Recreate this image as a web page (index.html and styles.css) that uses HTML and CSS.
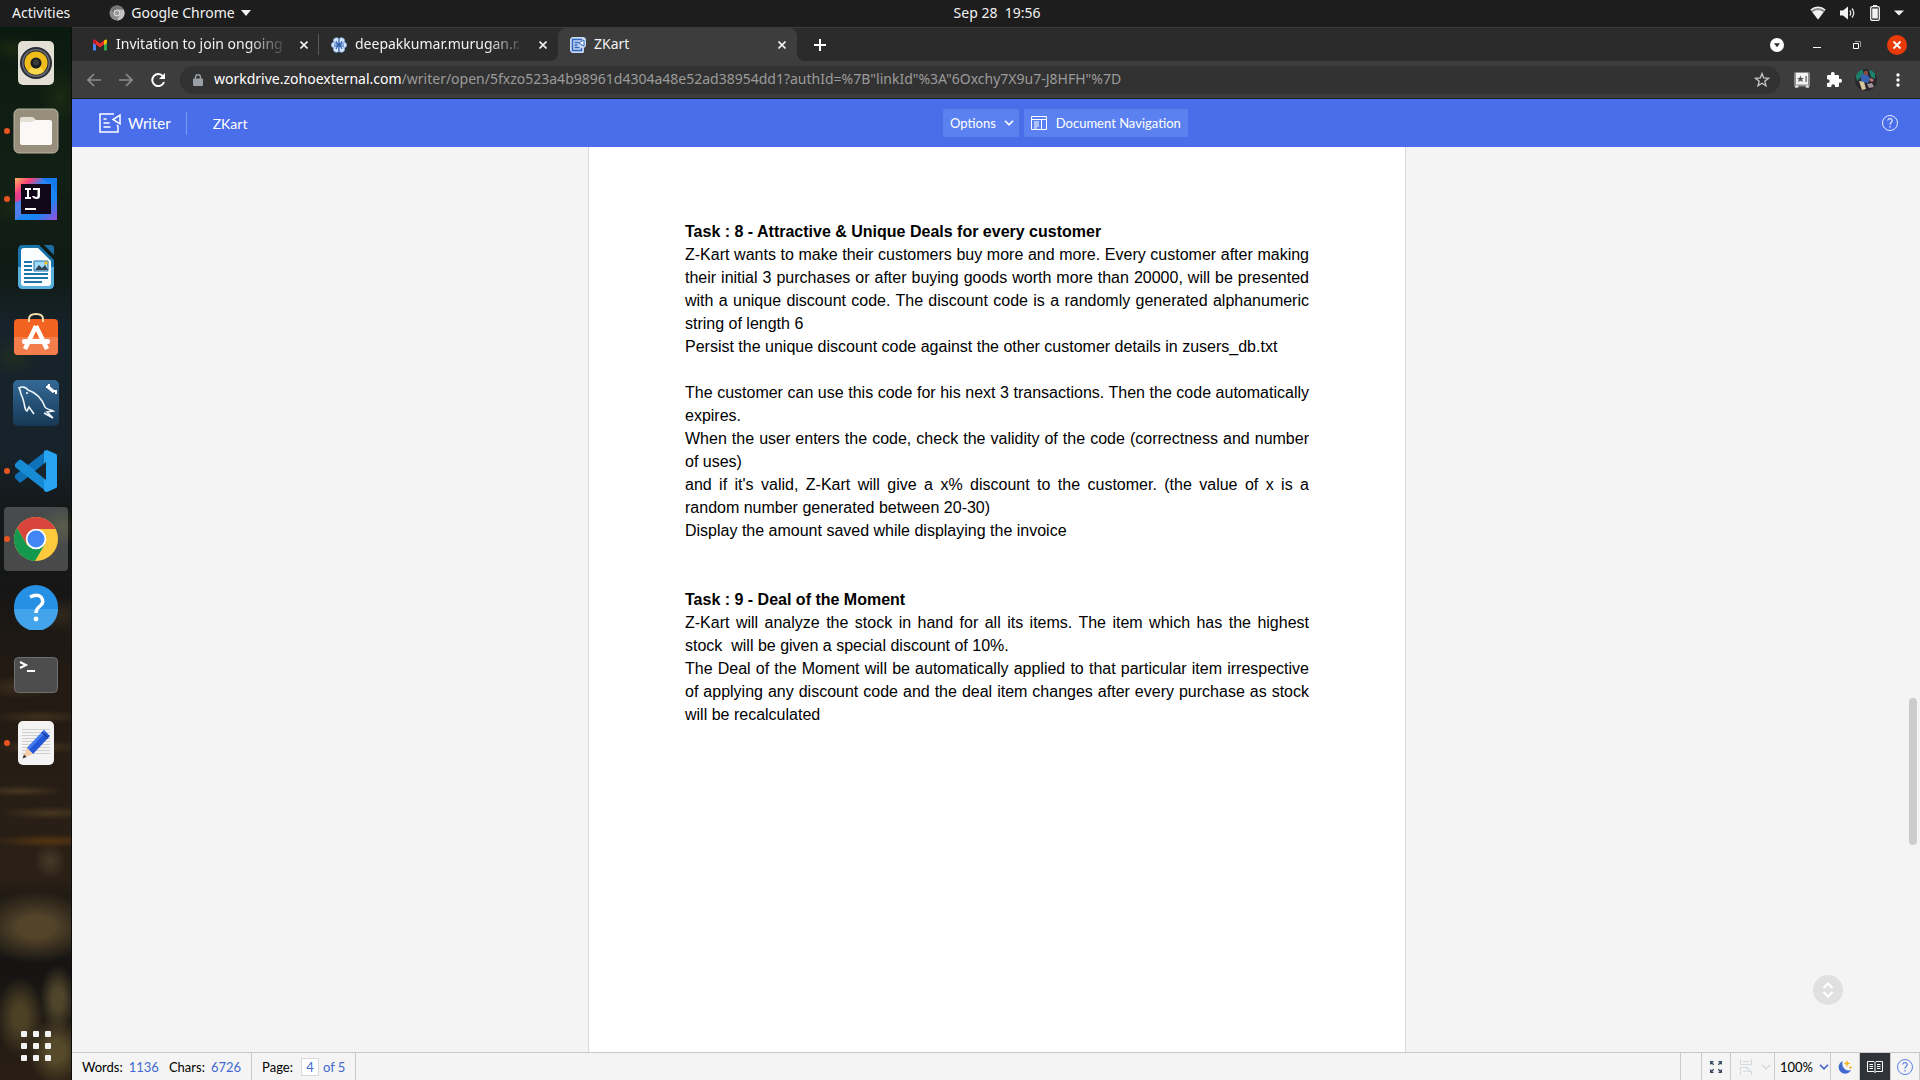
FILE: index.html
```html
<!DOCTYPE html>
<html lang="en">
<head>
<meta charset="utf-8">
<title>ZKart</title>
<link rel="stylesheet" href="styles.css">
</head>
<body>
<div class="desktop">
  <header class="topbar">
    <div class="topbar-left">
      <button class="plain">Activities</button>
      <button class="plain app-menu">
        <svg width="16" height="16" viewBox="0 0 16 16"><circle cx="8" cy="8" r="7.500" fill="#8c8c8c"/><path d="M8 4.500h6.700A7.500 7.500 0 0 1 8 15.500l3-5.700A3.500 3.500 0 0 0 8 4.500" fill="#c4c4c4"/><path d="M8 4.500h6.700A7.500 7.500 0 0 0 1.600 4l3.300 5.600A3.500 3.500 0 0 1 8 4.500" fill="#767676"/><circle cx="8" cy="8" r="3" fill="#9b9b9b" stroke="#e6e6e6"/></svg>
        <span>Google Chrome</span>
        <svg width="10" height="6" viewBox="0 0 10 6"><path d="M0 0h10L5 6z" fill="#f2f2f2"/></svg>
      </button>
    </div>
    <time class="clock">Sep 28&nbsp; 19:56</time>
    <div class="tray">
      <svg width="16" height="14" viewBox="0 0 16 14"><path d="M8 13.500L.6 4.300C4.500.6 11.500.6 15.400 4.300z" fill="#8d8d8d"/><path d="M8 13.500L2.600 6.200c3-2.600 7.800-2.600 10.800 0z" fill="#f2f2f2"/><path d="M.8 4C5 .4 11 .4 15.200 4" fill="none" stroke="#f2f2f2" stroke-width="1.400"/></svg>
      <svg width="16" height="14" viewBox="0 0 16 14"><path d="M0 4.500h3L8 .5v13L3 9.500H0z" fill="#f2f2f2"/><path d="M9.800 4.500q1.800 2.500 0 5M12 2.500q3.500 4.500 0 9" fill="none" stroke="#e2e2e2" stroke-width="1.300"/></svg>
      <svg width="10" height="16" viewBox="0 0 10 16"><path d="M3 0h4v2H3z" fill="#f2f2f2"/><rect x=".7" y="1.700" width="8.600" height="13.600" rx="1.300" fill="none" stroke="#f2f2f2" stroke-width="1.300"/><path d="M2.200 3.500h5.600v10H2.200z" fill="#f2f2f2"/></svg>
      <svg width="10" height="6" viewBox="0 0 10 6"><path d="M0 .5h10L5 5.500z" fill="#f2f2f2"/></svg>
    </div>
  </header>

  <div class="workspace">
    <nav class="dock" aria-label="Dock">
      <button class="app" aria-label="Rhythmbox"><svg width="46" height="46" viewBox="0 0 46 46"><rect x="5" y="1" width="36" height="44" rx="5" fill="#e3dfd5"/><circle cx="23" cy="23" r="16" fill="#2b2d38"/><circle cx="23" cy="23" r="14" fill="#6b7079"/><circle cx="23" cy="23" r="12.500" fill="#24252b"/><circle cx="23" cy="23" r="11.500" fill="#f0bd1c"/><path d="M23 23L15 31.200A11.500 11.500 0 0 0 31 31.200z" fill="#fad94e"/><circle cx="23" cy="23" r="5.500" fill="#1c1d20"/><circle cx="23" cy="22.500" r="3" fill="#3b3c40"/></svg></button>
      <button class="app running" aria-label="Files"><svg width="46" height="46" viewBox="0 0 46 46"><rect x="1" y="1" width="44" height="44" rx="5" fill="#978f7c" stroke="#b9b2a3"/><path d="M7 13V11q0-2 2-2h10q1 0 2 1l3 3h12q3 0 3 3H7z" fill="#e3dfd5"/><path d="M7 16q0-2 2-2h9l5-2h14q2 0 2 2v21q0 2-2 2H9q-2 0-2-2z" fill="#faf9f7"/></svg></button>
      <button class="app running" aria-label="IntelliJ IDEA"><svg width="46" height="46" viewBox="0 0 46 46"><defs><linearGradient id="ij" x1="0" y1="0" x2="1" y2="1"><stop offset="0" stop-color="#ffb45a"/><stop offset=".2" stop-color="#f9417b"/><stop offset=".38" stop-color="#2e84f2"/><stop offset=".7" stop-color="#1486f3"/><stop offset="1" stop-color="#9b4fd8"/></linearGradient></defs><path d="M2 2h42v42H2z" fill="url(#ij)"/><path d="M2 16L10 20 2 30z" fill="#e33d8a"/><path d="M2 26L10 24V38L2 44z" fill="#4f7fe8"/><path d="M28 2h16v18l-6-12z" fill="#157af0"/><path d="M8 8h30v30H8z" fill="#120718"/><path d="M12 12h6v2h-2v7h2v2h-6v-2h2v-7h-2zM20 12h7v8q0 3-3.500 3T19 20h2.300q.5 1 1.700 1 1.500 0 1.500-1.500V14H20zM12 32h11v2H12z" fill="#fff"/></svg></button>
      <button class="app" aria-label="LibreOffice Writer"><svg width="46" height="46" viewBox="0 0 46 46"><path d="M10 1h16l15 15v24q0 5-5 5H10q-5 0-5-5V6q0-5 5-5z" fill="#1873ab"/><path d="M5 23h36v17q0 5-5 5H10q-5 0-5-5z" fill="#58b0dc"/><path d="M11 4h14l13 13v22q0 3-3 3H11q-3 0-3-3V7q0-3 3-3z" fill="#fafcfd"/><path d="M31 1h7q3 0 3 3v7z" fill="#1b6fa3"/><path d="M11 18h8M11 22h8M11 26h8M11 30h24M11 34h24M11 38h18" stroke="#1d74a9" stroke-width="2"/><path d="M21 17h14v10H21z" fill="#9edafa" stroke="#1d74a9"/><path d="M22 26l4-5 3 3 3-3 3 5z" fill="#345"/><circle cx="33" cy="19" r="1.700" fill="#f5b91e"/></svg></button>
      <button class="app" aria-label="Ubuntu Software"><svg width="46" height="46" viewBox="0 2 46 46"><rect x="1" y="9" width="44" height="36" rx="4" fill="#f26322"/><path d="M1 27h44v14q0 4-4 4H5q-4 0-4-4z" fill="#f47e4b"/><path d="M16 12V9q0-5 7-5t7 5v3" fill="none" stroke="#f4dfae" stroke-width="2"/><path d="M23 16L12 39M23 16l11 23" stroke="#fff" stroke-width="4.500"/><rect x="9" y="29" width="28" height="5" rx="2" fill="#fff"/></svg></button>
      <button class="app" aria-label="MySQL Workbench"><svg width="46" height="46" viewBox="0 0 46 46"><defs><linearGradient id="my" x2="0" y2="1"><stop stop-color="#346a97"/><stop offset="1" stop-color="#173855"/></linearGradient></defs><rect width="46" height="46" rx="5" fill="url(#my)"/><path d="M12 28c-1-6-2-10-4-14-1-2 0-3-2-6 3-2 7-1 9 2 9 3 14 9 17 17 1 2 6 3 8 4l-6 1 6 6-9-5M21 34l-5-7-2 4q-2-1-2-4" fill="none" stroke="#edf5fb" stroke-width="1.600"/><path d="M34 6l7 6" stroke="#fff" stroke-width="3"/><path d="M36 4v3h-3M43 14v-3h-3" stroke="#fff" stroke-width="2" fill="none"/><circle cx="14" cy="13" r="1" fill="#fff"/></svg></button>
      <button class="app running" aria-label="Visual Studio Code"><svg width="46" height="46" viewBox="0 0 46 46"><path d="M2 30l4 4q1 1 2.500 0L34 14V2L2 27z" fill="#0f71b8"/><path d="M2 16l4-4q1-1 2.500 0L34 32v12L2 19z" fill="#188bd5"/><path d="M34 2l9 4q1 .5 1 1.500v31q0 1-1 1.500l-9 4-3-1V3z" fill="#26a3f1"/><path d="M33 14v18L22 23z" fill="#19242b"/></svg></button>
      <button class="app running current" aria-label="Google Chrome"><svg width="46" height="46" viewBox="0 0 46 46"><circle cx="23" cy="23" r="22" fill="#fdca3d"/><path d="M23 13h19.600A22 22 0 0 0 4 12l9.500 16z" fill="#d9443c"/><path d="M4 12l10 17 9 5-1 11A22 22 0 0 1 4 12" fill="#14994f"/><path d="M22 45l10-17-9 5-5-1z" fill="#14994f"/><circle cx="23" cy="23" r="10.300" fill="#fff"/><circle cx="23" cy="23" r="8.500" fill="#4285f4"/></svg></button>
      <button class="app" aria-label="Help"><svg width="46" height="46" viewBox="0 0 46 46"><circle cx="23" cy="23" r="22" fill="#2590e4"/><path d="M1 25a22 22 0 0 0 44 0z" fill="#43a4ec"/><path d="M17 13q7-3.500 11 0 4 5-1 9-4 3-4 7" fill="none" stroke="#fff" stroke-width="3.400"/><circle cx="23" cy="35" r="2.400" fill="#fff"/></svg></button>
      <button class="app" aria-label="Terminal"><svg width="46" height="46" viewBox="0 0 46 46"><rect x="1.500" y="5.500" width="43" height="35" rx="4" fill="#4d4d4d" stroke="#6f6f6f"/><path d="M7 10l6 3-6 3M14 19h8" fill="none" stroke="#fff" stroke-width="2"/></svg></button>
      <button class="app running" aria-label="Text Editor"><svg width="46" height="46" viewBox="0 0 46 46"><rect x="5" y="1" width="36" height="44" rx="5" fill="#f3f3f3"/><path d="M9 9.500h28M9 12.500h28M9 15.500h28M9 18.500h28M9 21.500h28M9 24.500h28M9 27.500h28M9 30.500h28M9 33.500h28" stroke="#cfcfcf"/><path d="M14 28L31 10l6 6-17 18z" fill="#2457d6"/><path d="M14 28L31 10l2 2-17 18z" fill="#447bf1"/><path d="M29 12l6 6" stroke="#193f9f" stroke-width="1.500"/><path d="M14 28l6 6-10 4z" fill="#f5cda6"/><path d="M11 34.500l2.500 2.500-4 1.500z" fill="#333"/></svg></button>
      <button class="app apps-grid" aria-label="Show Applications"><svg width="30" height="30" viewBox="0 0 30 30" fill="#f2f2f2"><rect width="6" height="6" rx="1"/><rect x="12" width="6" height="6" rx="1"/><rect x="24" width="6" height="6" rx="1"/><rect y="12" width="6" height="6" rx="1"/><rect x="12" y="12" width="6" height="6" rx="1"/><rect x="24" y="12" width="6" height="6" rx="1"/><rect y="24" width="6" height="6" rx="1"/><rect x="12" y="24" width="6" height="6" rx="1"/><rect x="24" y="24" width="6" height="6" rx="1"/></svg></button>
    </nav>

    <div class="browser">
      <div class="tabstrip">
        <div class="tab divided">
          <svg width="16" height="16" viewBox="0 0 16 16"><path d="M1 3.500v10h3V7z" fill="#4a86f5"/><path d="M15 3.500v10h-3V7z" fill="#31a650"/><path d="M1 3.500Q1.500 2 3.500 3L8 6.500 12.500 3v4L8 10.500 3.500 7z" fill="#ea2f2f"/><path d="M1 3.500Q1.500 2 4 3.500V8L1 6z" fill="#c5172b"/><path d="M12 3.400Q14.500 1.800 15 3.500V6l-3 2.200z" fill="#fbbc05"/></svg>
          <span class="tab-title fade">Invitation to join ongoing</span>
          <button class="plain tab-close" aria-label="Close tab"><svg width="8" height="8" viewBox="0 0 8 8"><path d="M.5.500l7 7m0-7l-7 7" stroke="#f2f2f2" stroke-width="1.600"/></svg></button>
        </div>
        <div class="tab">
          <svg width="16" height="16" viewBox="0 0 16 16"><g fill="#dbe9fb" stroke="#8fb3ea"><circle cx="5.500" cy="3.800" r="3"/><circle cx="10.500" cy="3.800" r="3"/><circle cx="3.300" cy="8" r="2.800"/><circle cx="12.700" cy="8" r="2.800"/><circle cx="5.500" cy="12.200" r="3"/><circle cx="10.500" cy="12.200" r="3"/></g><path d="M8 1.500v13M5 4l1.500 3H3M11 4L9.500 7H13M5 12l1.500-3H3M11 12L9.500 9H13" fill="none" stroke="#3568bd" stroke-width="1.200"/></svg>
          <span class="tab-title fade">deepakkumar.murugan.r.</span>
          <button class="plain tab-close" aria-label="Close tab"><svg width="8" height="8" viewBox="0 0 8 8"><path d="M.5.500l7 7m0-7l-7 7" stroke="#f2f2f2" stroke-width="1.600"/></svg></button>
        </div>
        <div class="tab active">
          <svg width="16" height="16" viewBox="0 0 16 16"><path d="M2 0h12l2 2v7l-2 2v4l-1 1H2l-2-2V2z" fill="#c8d9f3"/><path d="M12 2.500H2.500v11h9V11M4.500 5.500h4M4.500 8h3M4.500 10.500h5" fill="none" stroke="#2f66bd" stroke-width="1.500"/><path d="M14 3v6L8.500 6z" fill="#fff" stroke="#2f66bd"/></svg>
          <span class="tab-title">ZKart</span>
          <button class="plain tab-close" aria-label="Close tab"><svg width="8" height="8" viewBox="0 0 8 8"><path d="M.5.500l7 7m0-7l-7 7" stroke="#f2f2f2" stroke-width="1.600"/></svg></button>
        </div>
        <button class="plain new-tab" aria-label="New tab"><svg width="12" height="12" viewBox="0 0 12 12"><path d="M6 0v12M0 6h12" stroke="#fff" stroke-width="2"/></svg></button>
        <div class="window-controls">
          <button class="plain control" aria-label="Search tabs"><svg width="14" height="14" viewBox="0 0 14 14"><circle cx="7" cy="7" r="7" fill="#fff"/><path d="M4 5.200h6L7 9.200z" fill="#2b2b2b"/></svg></button>
          <button class="plain control" aria-label="Minimize"><svg width="8" height="8" viewBox="0 0 8 8"><path d="M0 6h8v1H0z" fill="#fff"/></svg></button>
          <button class="plain control" aria-label="Restore"><svg width="8" height="8" viewBox="0 0 8 8" fill="none"><path d="M.5 2.500h5v5h-5z" stroke="#fff"/><path d="M2 .5h5.500V6" stroke="#999"/></svg></button>
          <button class="plain control" aria-label="Close"><svg width="20" height="20" viewBox="0 0 20 20"><circle cx="10" cy="10" r="10" fill="#e93a0a"/><path d="M6.500 6.500l7 7m0-7l-7 7" stroke="#fff" stroke-width="1.800"/></svg></button>
        </div>
      </div>

      <div class="toolbar">
        <button class="plain tool" aria-label="Back"><svg width="14" height="14" viewBox="0 0 14 14"><path d="M14 7H1.500M7 1L1 7l6 6" fill="none" stroke="#8c8c8c" stroke-width="1.700"/></svg></button>
        <button class="plain tool" aria-label="Forward"><svg width="14" height="14" viewBox="0 0 14 14"><path d="M0 7h12.500M7 1l6 6-6 6" fill="none" stroke="#8c8c8c" stroke-width="1.700"/></svg></button>
        <button class="plain tool" aria-label="Reload"><svg width="14" height="14" viewBox="0 0 14 14"><path d="M12 3.300A6 6 0 1 0 13 9" fill="none" stroke="#fff" stroke-width="2"/><path d="M14 0v6H8z" fill="#fff"/></svg></button>
        <div class="omnibox">
          <svg width="10" height="12" viewBox="0 0 10 12"><rect y="4.500" width="10" height="7.500" rx="1" fill="#9aa0a6"/><path d="M2.500 5V3q0-2.300 2.500-2.300T7.500 3v2" fill="none" stroke="#9aa0a6" stroke-width="1.400"/></svg>
          <a class="url" href="#doc"><b>workdrive.zohoexternal.com</b>/writer/open/5fxzo523a4b98961d4304a48e52ad38954dd1?authId=%7B"linkId"%3A"6Oxchy7X9u7-J8HFH"%7D</a>
          <button class="plain" aria-label="Bookmark"><svg width="16" height="16" viewBox="0 0 16 16"><path d="M8 1.600l1.700 4.400 4.800.3-3.700 3 1.200 4.600L8 11.300l-4 2.600 1.200-4.600-3.700-3L6.300 6z" fill="none" stroke="#c8c8c8" stroke-width="1.300"/></svg></button>
        </div>
        <button class="plain tool" aria-label="Extension"><svg width="16" height="16" viewBox="0 0 16 16"><path d="M2 0h12q2 0 2 2v11l-1 3h-3l-1.500-1.500h-5L4 16H1l-1-3V2q0-2 2-2z" fill="#8d8d8d"/><path d="M2 1h12v11.500H2zM1.500 13.500h3l-1.500 2H1.500zM11.500 13.500h3v2H13z" fill="#f2f2f2"/><path d="M6.500 3.500l1 2.500H10L8 7.500 9 10 6.500 8.700 4 10l1-2.500L3 6h2.500zM11.500 4h1.200v6h-1.200z" fill="#555"/></svg></button>
        <button class="plain tool" aria-label="Extensions"><svg width="16" height="16" viewBox="0 0 16 16"><path d="M2.500 3H5q-.7-3 1.800-3T8.500 3H12q1 0 1 1v3q3-.7 3 1.800T13 10.500V14q0 1-1 1H9q.3-2.800-1.800-2.800T5.300 15H2q-1 0-1-1v-3q2.800.2 2.800-1.800T1 7.300V4q0-1 1.500-1z" fill="#fff"/></svg></button>
        <button class="plain tool" aria-label="Profile"><svg width="22" height="22" viewBox="0 0 22 22"><defs><clipPath id="av"><circle cx="11" cy="11" r="11"/></clipPath></defs><g clip-path="url(#av)"><path d="M0 0h22v22H0z" fill="#29272d"/><path d="M0 3l7-3 2 5-7 7zM14 1l6 1v8l-4-2z" fill="#1d806b"/><path d="M6 6l5-2 4 5-2 5-7-1z" fill="#3862b2"/><circle cx="11" cy="4" r="2.200" fill="#8b4c3a"/><path d="M4 12l5 1 2 7-4 1z" fill="#d8c79b"/><path d="M12 15l5-1 2 4-5 1z" fill="#a49297"/><path d="M16 9l3 2-2 2-3-2z" fill="#bd786b"/></g></svg></button>
        <button class="plain tool" aria-label="Menu"><svg width="4" height="14" viewBox="0 0 4 14" fill="#fff"><circle cx="2" cy="2" r="1.700"/><circle cx="2" cy="7" r="1.700"/><circle cx="2" cy="12" r="1.700"/></svg></button>
      </div>

      <header class="writer-bar">
        <div class="brand">
          <svg width="22" height="20" viewBox="0 0 22 20"><path d="M15 1H1v18h18v-5.500l-1-1.500M4.500 6h3M4.500 10h6M4.500 14h7" fill="none" stroke="#fff" stroke-width="1.500"/><path d="M21 2v9l-7-4.500z" fill="none" stroke="#fff" stroke-width="1.500"/></svg>
          <span class="brand-name">Writer</span>
          <span class="doc-name">ZKart</span>
        </div>
        <div class="writer-actions">
          <button class="pill">Options <svg width="10" height="6" viewBox="0 0 10 6"><path d="M1 .8l4 4 4-4" fill="none" stroke="#fff" stroke-width="1.600"/></svg></button>
          <button class="pill nav-pill"><svg width="16" height="14" viewBox="0 0 16 14"><path d="M.5.500h15v13H.5zM.5 3.500h15M10.500 3.500v10M3 6h5M3 8h5M3 10h5M3 12h3" fill="none" stroke="#fff"/></svg> Document Navigation</button>
        </div>
        <button class="plain help" aria-label="Help"><svg width="16" height="16" viewBox="0 0 16 16" fill="none" stroke="#e8edff"><circle cx="8" cy="8" r="7.500"/><path d="M5.700 5.500Q6 3.700 8 3.700t2.200 1.700C10.200 7.300 8 7.200 8 9.800M8 11v1.400" stroke-width="1.200"/></svg></button>
      </header>

      <main class="canvas" id="doc">
        <article class="sheet">
          <h2>Task : 8 - Attractive &amp; Unique Deals for every customer</h2>
          <p>Z-Kart wants to make their customers buy more and more. Every customer after making their initial 3 purchases or after buying goods worth more than 20000, will be presented with a unique discount code. The discount code is a randomly generated alphanumeric string of length 6</p>
          <p>Persist the unique discount code against the other customer details in zusers_db.txt</p>
          <p class="spaced">The customer can use this code for his next 3 transactions. Then the code automatically expires.</p>
          <p>When the user enters the code, check the validity of the code (correctness and number of uses)</p>
          <p>and if it's valid, Z-Kart will give a x% discount to the customer. (the value of x is a random number generated between 20-30)</p>
          <p>Display the amount saved while displaying the invoice</p>
          <h2 class="next-task">Task : 9 - Deal of the Moment</h2>
          <p>Z-Kart will analyze the stock in hand for all its items. The item which has the highest stock&nbsp; will be given a special discount of 10%.</p>
          <p>The Deal of the Moment will be automatically applied to that particular item irrespective of applying any discount code and the deal item changes after every purchase as stock will be recalculated</p>
        </article>
        <div class="scroll-thumb"></div>
        <button class="page-jump" aria-label="Jump to page"><svg width="12" height="16" viewBox="0 0 12 16"><path d="M1.500 6L6 1.500 10.500 6M1.500 10L6 14.500l4.500-4.500" fill="none" stroke="#fff" stroke-width="2.200"/></svg></button>
      </main>

      <footer class="statusbar">
        <div class="status-cell counts"><span>Words:</span><a href="#doc">1136</a><span class="chars">Chars:</span><a href="#doc">6726</a></div>
        <div class="status-cell pages"><label for="page">Page:</label><input id="page" value="4"><a href="#doc">of 5</a></div>
        <div class="status-right">
          <div class="status-cell blank"></div>
          <button class="status-cell icon-cell" aria-label="Full screen"><svg width="12" height="12" viewBox="0 0 12 12" fill="none" stroke="#39485e" stroke-width="1.300"><path d="M.7 3.500V.7h2.800M.7.700l3 3M8.500.7h2.800v2.800M11.300.700l-3 3M.7 8.500v2.800h2.800M.7 11.300l3-3M11.300 8.500v2.800H8.500M11.300 11.300l-3-3"/></svg></button>
          <button class="status-cell compare" aria-label="Page layout"><svg width="12" height="18" viewBox="0 0 12 18" fill="none" stroke="#d3d9df"><path d="M.5 1v5.500h11V1M3 3.500h6M.5 17V9.500h7l4 4V17M7.500 9.500v4h4M3 13.500h3"/></svg><svg width="10" height="6" viewBox="0 0 10 6"><path d="M1 .8l4 4 4-4" fill="none" stroke="#dadada" stroke-width="1.600"/></svg></button>
          <button class="status-cell zoom">100% <svg width="10" height="6" viewBox="0 0 10 6"><path d="M1 .8l4 4 4-4" fill="none" stroke="#3f66cc" stroke-width="1.600"/></svg></button>
          <button class="status-cell icon-cell" aria-label="Night mode"><svg width="14" height="14" viewBox="0 0 14 14"><path d="M5 1a6.500 6.500 0 1 0 8 9A6.500 6.500 0 0 1 5 1z" fill="#4169cf"/><path d="M9 0l.9 2.600 2.600.9-2.600.9L9 7l-.9-2.600-2.600-.9 2.600-.9zM12.500 6l1.500 1.500L12.500 9 11 7.500z" fill="#f9b417"/></svg></button>
          <button class="status-cell reader" aria-label="Reader view"><svg width="16" height="12" viewBox="0 0 16 12" fill="none" stroke="#fff"><path d="M8 1.500L7 .5H.5v10H7l1 1 1-1h6.500V.5H9zM8 1.500v10M2.500 3.500h3.500M2.500 5.500h3.500M2.500 7.500h3.500M10 3.500h3.500M10 5.500h3.500M10 7.500h3.500"/></svg></button>
          <button class="status-cell icon-cell" aria-label="Help"><svg width="16" height="16" viewBox="0 0 16 16" fill="none" stroke="#5b80ea"><circle cx="8" cy="8" r="7.500"/><path d="M5.700 5.500Q6 3.700 8 3.700t2.200 1.700C10.200 7.300 8 7.200 8 9.800M8 11v1.400" stroke-width="1.200"/></svg></button>
        </div>
      </footer>
    </div>
  </div>
</div>
</body>
</html>
```
FILE: styles.css
```css
* { box-sizing: border-box; }
body { margin: 0; }
button { font: inherit; color: inherit; cursor: pointer; }
svg { display: block; flex: none; }
a { color: inherit; text-decoration: none; }

.plain {
  display: flex;
  align-items: center;
  justify-content: center;
  padding: 0;
  border: 0;
  background: none;
}

.desktop {
  display: flex;
  flex-direction: column;
  height: 100vh;
  font-family: "Noto Sans", sans-serif;
  font-size: 14px;
  color: #f2f2f2;
  background: #1d1d1d;
}

/* Top panel */
.topbar {
  display: grid;
  grid-template-columns: 941fr auto 863fr;
  align-items: center;
  height: 27px;
  padding: 0 16px 2px 12px;
}
.topbar-left { display: flex; gap: 39px; }
.app-menu { gap: 6px; }
.tray {
  display: flex;
  align-items: center;
  justify-content: flex-end;
  gap: 14px;
}
.tray svg:first-child { margin-left: -1px; }

.workspace { display: flex; flex: 1; min-height: 0; }

/* Dock */
.dock {
  display: flex;
  flex-direction: column;
  gap: 4px;
  width: 72px;
  padding: 4px 3px 2px 4px;
  border-right: 1px solid #0c0c0c;
  background:
    radial-gradient(30px 14px at 14px 22px, #29361077, transparent),
    radial-gradient(22px 30px at 60px 70px, #24361388, transparent),
    radial-gradient(26px 20px at 14px 180px, #24361366, transparent),
    radial-gradient(24px 20px at 14px 330px, #2b391777, transparent),
    radial-gradient(24px 20px at 62px 500px, #4a4a1877, transparent),
    radial-gradient(30px 18px at 62px 588px, #4c3b2477, transparent),
    radial-gradient(40px 12px at 20px 660px, #4c3b2499, transparent),
    radial-gradient(50px 7px at 40px 690px, #55422688, transparent),
    radial-gradient(50px 7px at 40px 720px, #55422699, transparent),
    radial-gradient(46px 6px at 20px 764px, #5b472899, transparent),
    radial-gradient(50px 7px at 50px 786px, #5d462799, transparent),
    radial-gradient(60px 7px at 50px 814px, #6b3f0faa, transparent),
    radial-gradient(16px 18px at 50px 834px, #51452ebb, transparent),
    radial-gradient(60px 36px at 36px 900px, #54442a 30%, transparent),
    radial-gradient(24px 40px at 20px 990px, #4c4025 30%, transparent),
    radial-gradient(18px 34px at 58px 972px, #4f452c 30%, transparent),
    radial-gradient(28px 34px at 56px 1024px, #574a2b 30%, transparent),
    linear-gradient(#0b1a10 0, #121f14 150px, #101a16 250px, #17232b 300px, #17222a 430px, #14191a 480px, #161616 560px, #221a13 640px, #2a2016 850px, #1b1813 880px, #151413 940px, #2a1f14 1053px);
}
.app {
  position: relative;
  display: flex;
  align-items: center;
  justify-content: center;
  height: 64px;
  padding: 0;
  border: 0;
  border-radius: 4px;
  background: none;
}
.current { background: #ffffff38; }
.running::before {
  content: "";
  position: absolute;
  left: 0;
  top: 29px;
  width: 6px;
  height: 6px;
  border-radius: 50%;
  background: #e95420;
}
.apps-grid { margin-top: auto; }

/* Browser */
.browser { display: flex; flex-direction: column; flex: 1; min-width: 0; }
.tabstrip {
  display: flex;
  height: 34px;
  padding: 0 3px 0 8px;
  border-top: 1px solid #3c3c3c;
  background: #2b2b2b;
}
.tab {
  position: relative;
  display: flex;
  align-items: center;
  gap: 8px;
  width: 239px;
  padding: 0 7px 0 12px;
}
.divided::after {
  content: "";
  position: absolute;
  right: 0;
  top: 6px;
  width: 1px;
  height: 21px;
  background: #5a5a5a;
}
.active { background: #3d3d3d; border-radius: 8px 8px 0 0; }
.active::before,
.active::after {
  content: "";
  position: absolute;
  bottom: 0;
  width: 8px;
  height: 8px;
}
.active::before { left: -8px; background: radial-gradient(circle at 0 0, transparent 8px, #3d3d3d 8px); }
.active::after { right: -8px; background: radial-gradient(circle at 100% 0, transparent 8px, #3d3d3d 8px); }
.tab-title { flex: 1; min-width: 0; padding-bottom: 2px; white-space: nowrap; }
.fade { mask-image: linear-gradient(to right, #000 calc(100% - 40px), transparent); }
.tab-close { width: 16px; height: 16px; }
.new-tab { width: 46px; }
.window-controls { display: flex; margin-left: auto; }
.control { width: 40px; }

.toolbar {
  display: flex;
  align-items: center;
  height: 38px;
  padding: 0 6px;
  border-bottom: 1px solid #1f1f1f;
  background: #3d3d3d;
}
.tool { width: 32px; height: 28px; }
.omnibox {
  display: flex;
  align-items: center;
  flex: 1;
  min-width: 0;
  gap: 11px;
  height: 28px;
  margin: 0 6px;
  padding: 0 10px 0 13px;
  border-radius: 14px;
  background: #323232;
}
.url {
  flex: 1;
  overflow: hidden;
  padding-bottom: 2px;
  white-space: nowrap;
  color: #9b9b9b;
}
.url b { font-weight: 400; color: #fff; }

/* Writer header */
.writer-bar {
  display: grid;
  grid-template-columns: 872fr auto 733fr;
  align-items: center;
  height: 48px;
  font-family: Lato, sans-serif;
  font-size: 13px;
  color: #fff;
  background: #4a6dea;
}
.brand { display: flex; align-items: center; gap: 7px; padding-left: 27px; }
.brand-name { font-size: 15px; }
.doc-name {
  margin-left: 8px;
  padding-left: 26px;
  font-size: 14px;
  line-height: 23px;
  border-left: 1px solid #7f9af5;
}
.writer-actions { display: flex; gap: 5px; }
.pill {
  display: flex;
  align-items: center;
  gap: 8px;
  height: 28px;
  padding: 0 5px 0 7px;
  border: 0;
  border-radius: 2px;
  background: #5b81f1;
}
.nav-pill { gap: 9px; padding: 0 7px; }
.help { justify-self: end; margin-right: 22px; }

/* Document */
.canvas {
  position: relative;
  flex: 1;
  min-height: 0;
  overflow: hidden;
  padding-left: 2px;
  background: #f4f4f4;
}
.sheet {
  width: 818px;
  max-width: 100%;
  min-height: 100%;
  margin: 0 auto;
  padding: 73px 96px;
  border: 1px solid #d9d9d9;
  border-width: 0 1px;
  font: 16px/23px "Liberation Sans", Arial, sans-serif;
  text-align: justify;
  color: #000;
  background: #fff;
}
.sheet h2 { margin: 0; font-size: 16px; text-align: left; }
.sheet p { margin: 0; }
.sheet .spaced { margin-top: 23px; }
.sheet .next-task { margin-top: 46px; }
.scroll-thumb {
  position: absolute;
  right: 3px;
  top: 551px;
  width: 8px;
  height: 147px;
  border-radius: 4px;
  background: #cccccc;
}
.page-jump {
  position: absolute;
  right: 77px;
  bottom: 47px;
  display: flex;
  align-items: center;
  justify-content: center;
  width: 30px;
  height: 30px;
  padding: 0;
  border: 0;
  border-radius: 50%;
  background: #e0e0e0;
}

/* Status bar */
.statusbar {
  display: flex;
  height: 28px;
  border-top: 1px solid #c9c9c9;
  font-family: Lato, sans-serif;
  font-size: 13px;
  color: #000;
  background: #f4f4f4;
}
.statusbar a { color: #4169cf; }
.status-cell {
  display: flex;
  align-items: center;
  padding: 0;
  border: 0;
  border-right: 1px solid #c9c9c9;
  background: none;
}
.counts { gap: 6px; padding: 0 10px; }
.chars { margin-left: 4px; }
.pages { gap: 4px; padding: 0 10px; }
.pages input {
  width: 18px;
  height: 18px;
  margin-left: 4px;
  padding: 0;
  border: 1px solid #d9d9d9;
  font: inherit;
  text-align: center;
  color: #4169cf;
  background: #fff;
}
.status-right {
  display: flex;
  margin-left: auto;
  border-left: 1px solid #c9c9c9;
}
.blank { width: 21px; }
.icon-cell { justify-content: center; width: 29px; }
.compare { gap: 9px; width: 44px; padding-left: 9px; }
.zoom { gap: 6px; width: 56px; padding-left: 5px; }
.reader { justify-content: center; width: 31px; background: #303338; }
```
